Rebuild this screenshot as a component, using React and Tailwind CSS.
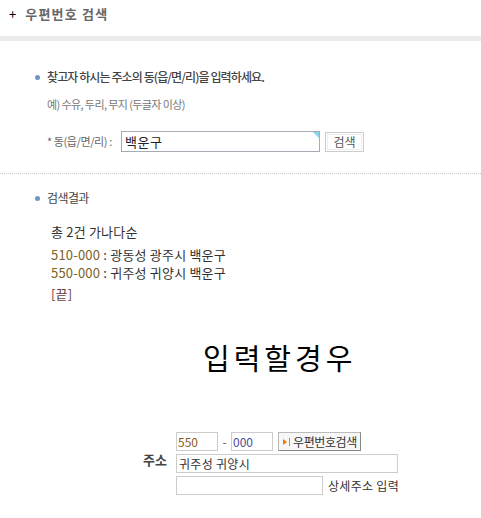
const font = { fontFamily: '"Noto Sans CJK KR", "Noto Sans", sans-serif' };

function Bullet() {
  return <span className="inline-block w-[5px] h-[5px] rounded-full bg-[#6c94c4] mr-[7px]" />;
}

export default function App() {
  return (
    <div className="w-[481px] h-[518px] bg-white overflow-hidden font-['Noto_Sans_CJK_KR',sans-serif]" style={font}>
      {/* header */}
      <div className="h-[36px] flex items-start pt-[5px] pl-[9px]">
        <span className="text-[13px] leading-[18px] text-black mr-[9px]">+</span>
        <span className="text-[13px] leading-[18px] font-bold text-[#666] tracking-[1.2px]">우편번호 검색</span>
      </div>
      <div className="h-[5px] bg-[#ebebeb]" />

      {/* search form */}
      <div className="pl-[35px] pt-[28px]">
        <div className="flex items-center h-[16px]">
          <Bullet />
          <span className="text-[12px] font-medium text-[#444] tracking-[-0.9px]">
            찾고자 하시는 주소의 동(읍/면/리)을 입력하세요.
          </span>
        </div>
        <div className="pl-[12px] mt-[11px] h-[16px] flex items-center text-[11px] text-[#777] tracking-[-0.6px]">
          예) 수유, 두리, 무지 (두글자 이상)
        </div>
        <div className="pl-[12px] mt-[19px] flex items-center">
          <span className="text-[11px] text-[#666] tracking-[-0.4px] w-[74px]">* 동(읍/면/리) :</span>
          <div className="relative w-[199px] h-[21px] border border-[#a5acb5] flex items-center pl-[3px]">
            <span className="text-[13px] text-[#222] leading-none tracking-[0.5px]">백운구</span>
            <span className="absolute top-0 right-0 w-0 h-0 border-t-[6px] border-t-[#8fd0ee] border-l-[6px] border-l-transparent" />
          </div>
          <div className="ml-[5px] w-[39px] h-[20px] border border-[#ccc] p-[1px]">
            <div className="w-full h-full border border-[#eee] flex items-center justify-center text-[12px] text-[#555]">검색</div>
          </div>
        </div>
      </div>

      <div className="mt-[21px] border-t border-dotted border-[#ccc]" />

      {/* results */}
      <div className="pl-[35px] pt-[16px]">
        <div className="flex items-center h-[16px]">
          <Bullet />
          <span className="text-[12px] text-[#444] tracking-[-0.6px]">검색결과</span>
        </div>
        <div className="pl-[16px] mt-[17px] text-[13px] text-[#333] leading-[18px] tracking-[0.2px]">
          <div>총 2건 가나다순</div>
          <div className="mt-[5px]">
            <span className="text-[#7a6222]">510-000</span> : 광동성 광주시 백운구
          </div>
          <div>
            <span className="text-[#7a6222]">550-000</span> : 귀주성 귀양시 백운구
          </div>
          <div className="mt-[3px] text-[#6b3d3d]">[끝]</div>
        </div>
      </div>

      <div className="mt-[36px] pl-[203px] text-[29px] leading-[36px] text-black tracking-[4px]">입력할경우</div>

      {/* address form */}
      <div className="mt-[57px] flex">
        <div className="w-[176px] flex justify-end pr-[9px] pt-[19px]">
          <span className="text-[13px] font-bold text-[#444] leading-[18px]">주소</span>
        </div>
        <div className="flex flex-col gap-[3px]">
          <div className="flex items-center">
            <div className="w-[42px] h-[19px] border border-[#ccc] flex items-center pl-[1px] text-[12px] text-[#8a5a1c]">550</div>
            <span className="w-[13px] text-center text-[12px] text-[#555]">-</span>
            <div className="w-[42px] h-[19px] border border-[#ccc] flex items-center pl-[1px] text-[12px] text-[#4a4a9a]">000</div>
            <div className="ml-[5px] h-[19px] w-[83px] pl-[4px] border border-[#bbb] border-r-[#888] border-b-[#888] bg-[#f7f7f7] flex items-center text-[12px] text-[#333] tracking-[-0.4px]">
              <span className="w-0 h-0 border-y-[3px] border-y-transparent border-l-[4px] border-l-[#f07800] mr-[2px]" />
              <span className="w-[1px] h-[8px] bg-[#999] mr-[3px]" />
              우편번호검색
            </div>
          </div>
          <div className="w-[222px] h-[19px] border border-[#ccc] flex items-center pl-[2px] text-[12px] text-[#333] tracking-[0.3px]">귀주성 귀양시</div>
          <div className="flex items-center">
            <div className="w-[147px] h-[19px] border border-[#ccc]" />
            <span className="ml-[5px] text-[12px] text-[#333] tracking-[0.3px]">상세주소 입력</span>
          </div>
        </div>
      </div>
    </div>
  );
}
